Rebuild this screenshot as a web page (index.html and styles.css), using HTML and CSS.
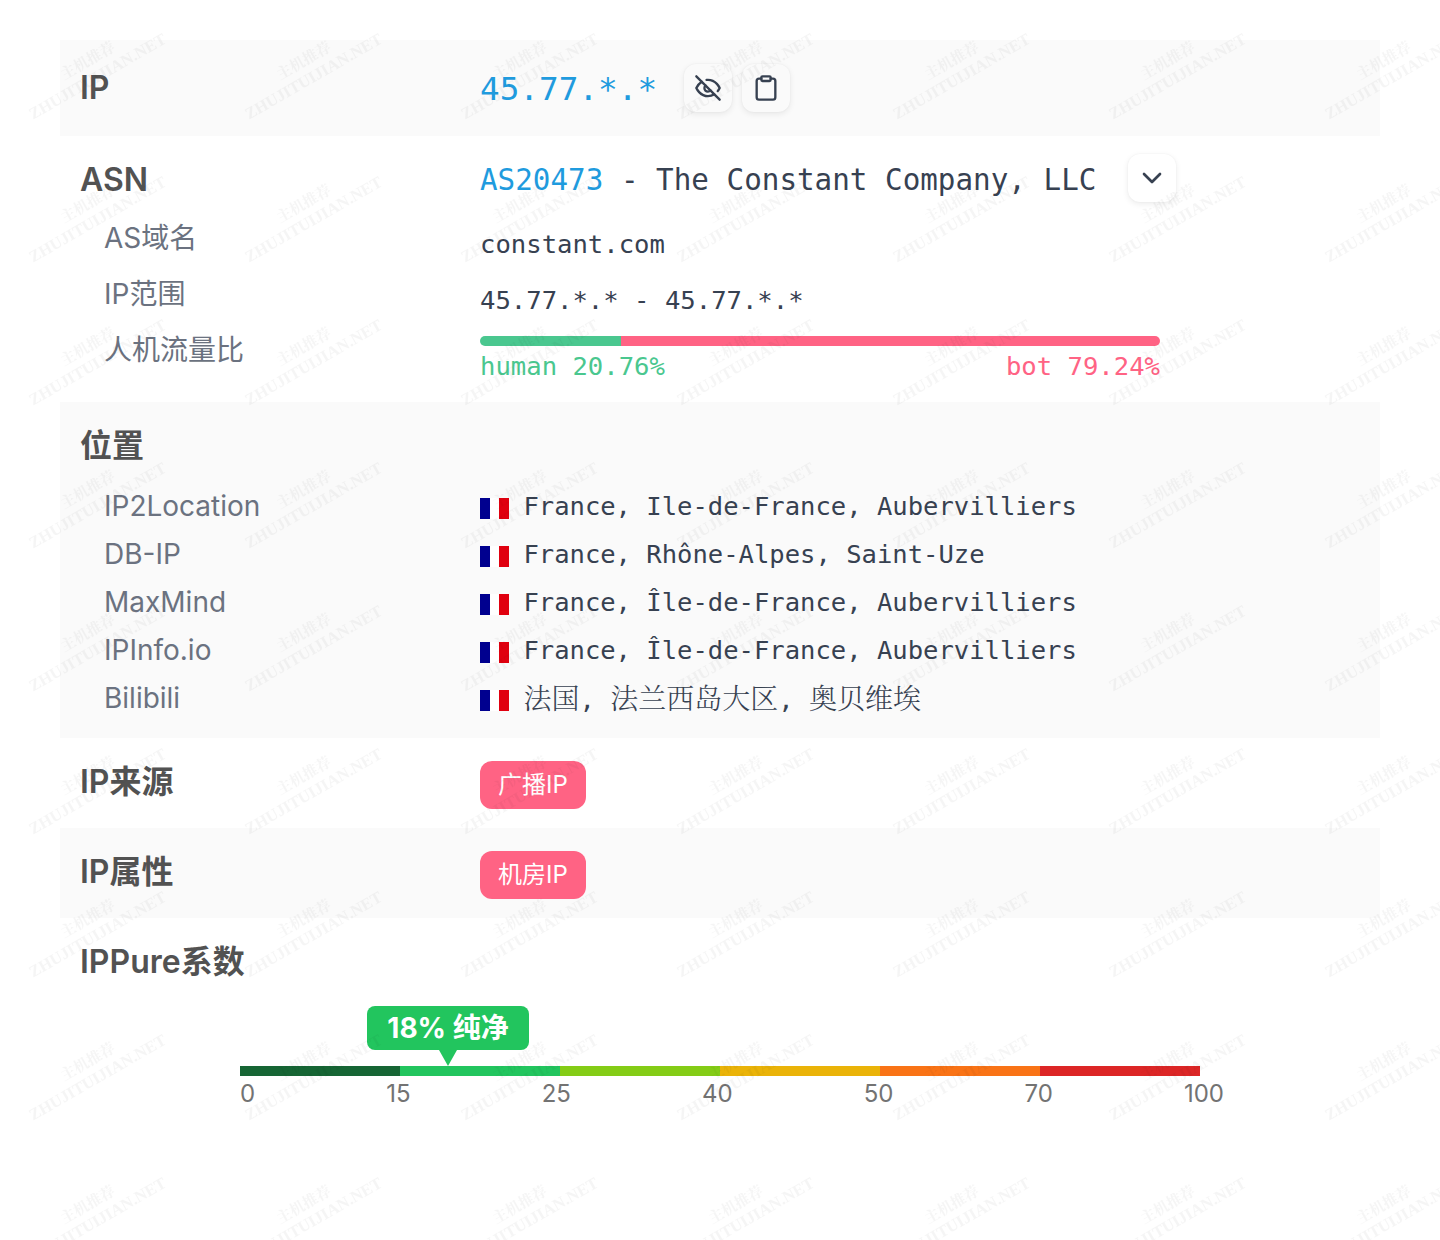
FILE: index.html
```html
<!DOCTYPE html>
<html lang="zh-CN">
<head>
<meta charset="utf-8">
<title>IP</title>
<link rel="stylesheet" href="styles.css">
</head>
<body>
<main class="page">
  <section class="row band row-ip">
    <div class="label">IP</div>
    <div class="ip-value">
      <span class="ip-text">45.77.*.*</span>
      <button class="icon-btn ip-first"><svg viewBox="0 0 24 24" class="icon"><path d="M9.88 9.88a3 3 0 1 0 4.24 4.24"/><path d="M10.73 5.08A10.43 10.43 0 0 1 12 5c7 0 10 7 10 7a13.16 13.16 0 0 1-1.67 2.68"/><path d="M6.61 6.61A13.526 13.526 0 0 0 2 12s3 7 10 7a9.74 9.74 0 0 0 5.39-1.61"/><path d="M2 2l20 20"/></svg></button>
      <button class="icon-btn"><svg viewBox="0 0 24 24" class="icon"><rect x="8" y="2" width="8" height="4" rx="1"/><path d="M16 4h2a2 2 0 0 1 2 2v14a2 2 0 0 1-2 2H6a2 2 0 0 1-2-2V6a2 2 0 0 1 2-2h2"/></svg></button>
    </div>
  </section>

  <section class="block block-asn">
    <div class="row row-asn">
      <div class="label label-asn">ASN</div>
      <div class="asn-value">
        <span class="asn-text"><span class="link">AS20473</span> - The Constant Company, LLC</span>
        <button class="icon-btn chevron-btn"><svg viewBox="0 0 24 24" class="icon-sm"><path d="M6 9l6 6l6-6"/></svg></button>
      </div>
    </div>
    <div class="row sub-tall"><div class="sublabel">AS域名</div><div class="mono value-tall">constant.com</div></div>
    <div class="row sub-tall"><div class="sublabel">IP范围</div><div class="mono value-tall">45.77.*.* - 45.77.*.*</div></div>
    <div class="row sub-tall"><div class="sublabel">人机流量比</div>
      <div class="ratio">
        <div class="ratio-bar"><div class="ratio-human" style="width:20.76%"></div><div class="ratio-bot"></div></div>
        <div class="ratio-text"><span class="human">human 20.76%</span><span class="bot">bot 79.24%</span></div>
      </div>
    </div>
  </section>

  <section class="block band block-loc">
    <div class="row row-title"><div class="label">位置</div></div>
    <div class="row sub"><div class="sublabel">IP2Location</div><div class="loc"><span class="flag"><i></i><i></i><i></i></span><span class="mono">France, Ile-de-France, Aubervilliers</span></div></div>
    <div class="row sub"><div class="sublabel">DB-IP</div><div class="loc"><span class="flag"><i></i><i></i><i></i></span><span class="mono">France, Rhône-Alpes, Saint-Uze</span></div></div>
    <div class="row sub"><div class="sublabel">MaxMind</div><div class="loc"><span class="flag"><i></i><i></i><i></i></span><span class="mono">France, Île-de-France, Aubervilliers</span></div></div>
    <div class="row sub"><div class="sublabel">IPInfo.io</div><div class="loc"><span class="flag"><i></i><i></i><i></i></span><span class="mono">France, Île-de-France, Aubervilliers</span></div></div>
    <div class="row sub"><div class="sublabel">Bilibili</div><div class="loc"><span class="flag"><i></i><i></i><i></i></span><span class="mono"><span class="cjk">法国</span>, <span class="cjk">法兰西岛大区</span>, <span class="cjk">奥贝维埃</span></span></div></div>
  </section>

  <section class="row row-tag">
    <div class="label">IP来源</div>
    <div><span class="tag">广播IP</span></div>
  </section>
  <section class="row band row-tag">
    <div class="label">IP属性</div>
    <div><span class="tag">机房IP</span></div>
  </section>

  <section class="block block-score">
    <div class="row row-title-score"><div class="label">IPPure系数</div></div>
    <div class="scale">
      <div class="bubble">18% 纯净</div>
      <div class="scale-bar"><i class="s1"></i><i class="s2"></i><i class="s3"></i><i class="s4"></i><i class="s5"></i><i class="s6"></i></div>
      <div class="ticks"><span>0</span><span>15</span><span>25</span><span>40</span><span>50</span><span>70</span><span>100</span></div>
    </div>
  </section>
</main>

<svg class="watermark" width="1440" height="1240" aria-hidden="true">
  <defs>
    <pattern id="wm" x="15" y="13" width="216" height="143" patternUnits="userSpaceOnUse">
      <g transform="translate(10 93) rotate(-30)">
        <text class="wm-a" x="47" y="-3">主机推荐</text>
        <text class="wm-b" x="0" y="16">ZHUJITUIJIAN.NET</text>
      </g>
    </pattern>
  </defs>
  <rect width="1440" height="1240" fill="url(#wm)"/>
</svg>
</body>
</html>
```
FILE: styles.css
```css
* { box-sizing: border-box; }
html, body { margin: 0; padding: 0; }
body {
  position: relative;
  height: 1240px;
  overflow: hidden;
  background: #fff;
  font-family: Inter, "Noto Sans CJK SC", sans-serif;
  color: #374151;
}
.page { padding: 40px 60px 0; }
.band { background: #fafafa; }
.row {
  display: grid;
  grid-template-columns: 400px 1fr;
  padding: 0 20px;
}
.label {
  font-size: 32px;
  font-weight: 600;
  line-height: 48px;
  color: #525252;
}
.label-asn { margin-top: 4px; }
.sublabel {
  padding-left: 24px;
  font-size: 28px;
  line-height: 40px;
  color: #6b7280;
}
.mono {
  font-family: "DejaVu Sans Mono", monospace;
  font-size: 25.6px;
  line-height: 40px;
  color: #374151;
}
.loc .mono { font-size: 25.54px; }
.cjk {
  font-family: "Noto Serif CJK SC", "AR PL UMing CN", "Noto Sans CJK SC", serif;
  font-size: 28px;
  font-weight: 300;
}

.row-ip { height: 96px; align-items: center; }
.ip-value { display: flex; align-items: center; }
.ip-text {
  font-family: "DejaVu Sans Mono", monospace;
  font-size: 32.7px;
  color: #1f9bde;
  margin-top: 1px;
}
.icon-btn {
  width: 48px;
  height: 48px;
  margin: 0 0 0 10px;
  padding: 0;
  display: flex;
  align-items: center;
  justify-content: center;
  background: #fafafa;
  border: 0;
  border-radius: 12px;
  box-shadow: 0 2px 6px rgba(0,0,0,.08), 0 0 2px rgba(0,0,0,.05);
}
.ip-first { margin-left: 27px; }
.icon { width: 28px; height: 28px; fill: none; stroke: #374151; stroke-width: 2; stroke-linecap: round; stroke-linejoin: round; }
.icon-sm { width: 32px; height: 32px; fill: none; stroke: #374151; stroke-width: 2; stroke-linecap: round; stroke-linejoin: round; }

.block-asn { height: 266px; }
.row-asn { padding-top: 18px; align-items: center; grid-template-rows: 48px; }
.asn-value { display: flex; align-items: center; }
.asn-text {
  font-family: "DejaVu Sans Mono", monospace;
  font-size: 29.25px;
  color: #374151;
  white-space: pre;
  margin-top: 4px;
}
.link { color: #1f9bde; }
.chevron-btn { margin-left: 32px; background: #fff; }
.sub { height: 48px; align-items: center; }
.sub-tall { height: 56px; padding-top: 16px; align-items: start; }
.value-tall { margin-top: 6px; }

.ratio { padding-top: 6px; width: 680px; }
.ratio-bar { display: flex; height: 10px; border-radius: 5px; overflow: hidden; }
.ratio-human { background: #4ac78f; }
.ratio-bot { flex: 1; background: #ff6384; }
.ratio-text {
  display: flex;
  justify-content: space-between;
  font-family: "DejaVu Sans Mono", monospace;
  font-size: 25.6px;
  line-height: 40px;
}
.human { color: #4ac78f; }
.bot { color: #ff6384; }

.block-loc { height: 336px; }
.row-title { padding-top: 20px; height: 80px; }
.loc { display: flex; align-items: center; }
.flag { display: flex; width: 28.8px; height: 21px; margin: 5px 14.6px 0 0; }
.flag i { flex: 1; }
.flag i:nth-child(1) { background: #00008f; }
.flag i:nth-child(2) { background: #fff; }
.flag i:nth-child(3) { background: #e0000f; }

.row-tag { height: 90px; padding-top: 20px; }
.tag {
  display: inline-block;
  margin-top: 3px;
  height: 48px;
  padding: 0 18px;
  font-size: 24px;
  line-height: 48px;
  color: #fff;
  background: #ff6384;
  border-radius: 12px;
}

.row-title-score { padding-top: 20px; }
.scale { position: relative; width: 984px; margin: 80px 0 0 180px; }
.scale-bar { display: flex; width: 960px; height: 10px; }
.scale-bar i { flex: 1; }
.s1 { background: #166534; }
.s2 { background: #22c55e; }
.s3 { background: #84cc16; }
.s4 { background: #eab308; }
.s5 { background: #f97316; }
.s6 { background: #dc2626; }
.bubble {
  position: absolute;
  left: 127px;
  top: -60px;
  width: 162px;
  height: 44px;
  font-size: 28px;
  font-weight: 700;
  line-height: 44px;
  text-align: center;
  color: #fff;
  background: #22c55e;
  border-radius: 8px;
}
.bubble::after {
  content: "";
  position: absolute;
  left: 72px;
  top: 44px;
  border-left: 9px solid transparent;
  border-right: 9px solid transparent;
  border-top: 16px solid #22c55e;
}
.ticks {
  display: flex;
  justify-content: space-between;
  font-size: 24px;
  line-height: 36px;
  color: #737373;
}

.watermark { position: absolute; left: 0; top: 0; pointer-events: none; }
.wm-a { font-family: "Noto Serif CJK SC", "Noto Sans CJK SC", serif; font-size: 15px; font-weight: 700; fill: rgba(0,0,0,.04); }
.wm-b { font-family: "Liberation Serif", serif; font-size: 16.4px; font-weight: 700; fill: rgba(0,0,0,.04); }
```
